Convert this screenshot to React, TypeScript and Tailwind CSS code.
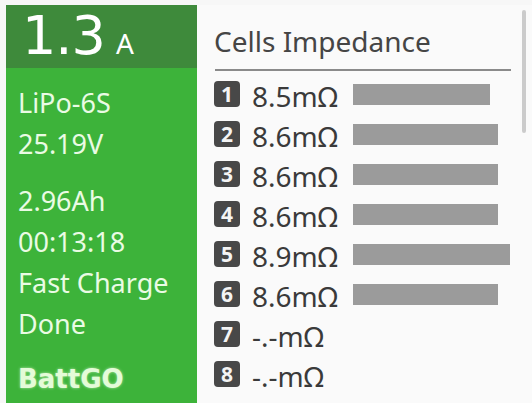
import React from "react";

const rows: { n: number; v: string; w: number }[] = [
  { n: 1, v: "8.5mΩ", w: 137 },
  { n: 2, v: "8.6mΩ", w: 145 },
  { n: 3, v: "8.6mΩ", w: 145 },
  { n: 4, v: "8.6mΩ", w: 145 },
  { n: 5, v: "8.9mΩ", w: 157 },
  { n: 6, v: "8.6mΩ", w: 145 },
  { n: 7, v: "-.-mΩ", w: 0 },
  { n: 8, v: "-.-mΩ", w: 0 },
];

export default function App() {
  return (
    <div
      className="w-[532px] h-[403px] overflow-hidden bg-[#f7f7f7] flex pt-[5px] pl-[6px]"
      style={{ fontFamily: '"Noto Sans", "Open Sans", sans-serif' }}
    >
      <div className="w-[191px] h-[400px] bg-[#3db33a] flex flex-col text-[#eafbe4]">
        <div className="h-[63px] bg-[#3e8a3b] flex items-baseline pl-[16px] pt-[6px] text-white">
          <span
            className="text-[54px] leading-[50px] tracking-[-1px]"
            style={{ fontFamily: '"DejaVu Sans", sans-serif' }}
          >
            1.3
          </span>
          <span className="text-[28px] leading-[50px] ml-[11px]">A</span>
        </div>
        <div className="flex flex-col pl-[12px] pt-[14px] text-[27px] leading-[41px]">
          <div>LiPo-6S</div>
          <div>25.19V</div>
          <div className="mt-[16px]">2.96Ah</div>
          <div>00:13:18</div>
          <div>Fast Charge</div>
          <div>Done</div>
          <div
            className="mt-[15px] text-[26px] font-bold leading-[40px] text-[#e4fbd8]"
            style={{ fontFamily: '"DejaVu Sans", sans-serif', textShadow: "0 0 3px rgba(230,255,220,0.7)" }}
          >
            BattGO
          </div>
        </div>
      </div>
      <div className="flex-1 flex pl-[17px] bg-[#fafafa]">
        <div className="w-[297px] flex flex-col">
          <div className="mt-[18px] text-[28px] leading-[36px] text-[#454545]">Cells Impedance</div>
          <div className="mt-[10px] ml-[1px] h-[2px] bg-[#8a8a8a]" />
          <div className="mt-[3px] flex flex-col">
            {rows.map((r) => (
              <div key={r.n} className="h-[40px] flex items-center">
                <div className="shrink-0 w-[26px] h-[26px] rounded-[4px] bg-[#484848] flex items-center justify-center text-[#f4f4f4] text-[21px] font-bold leading-none">
                  {r.n}
                </div>
                <div className="w-[113px] shrink-0 pl-[12px] pt-[3px] text-[28px] leading-none text-[#3a3a3a]">{r.v}</div>
                {r.w > 0 && <div className="shrink-0 h-[21px] bg-[#9b9b9b]" style={{ width: r.w }} />}
              </div>
            ))}
          </div>
        </div>
        <div className="ml-[11px] mt-[5px] w-[4px] h-[123px] rounded-full bg-[#cbcbcb]" />
      </div>
    </div>
  );
}
